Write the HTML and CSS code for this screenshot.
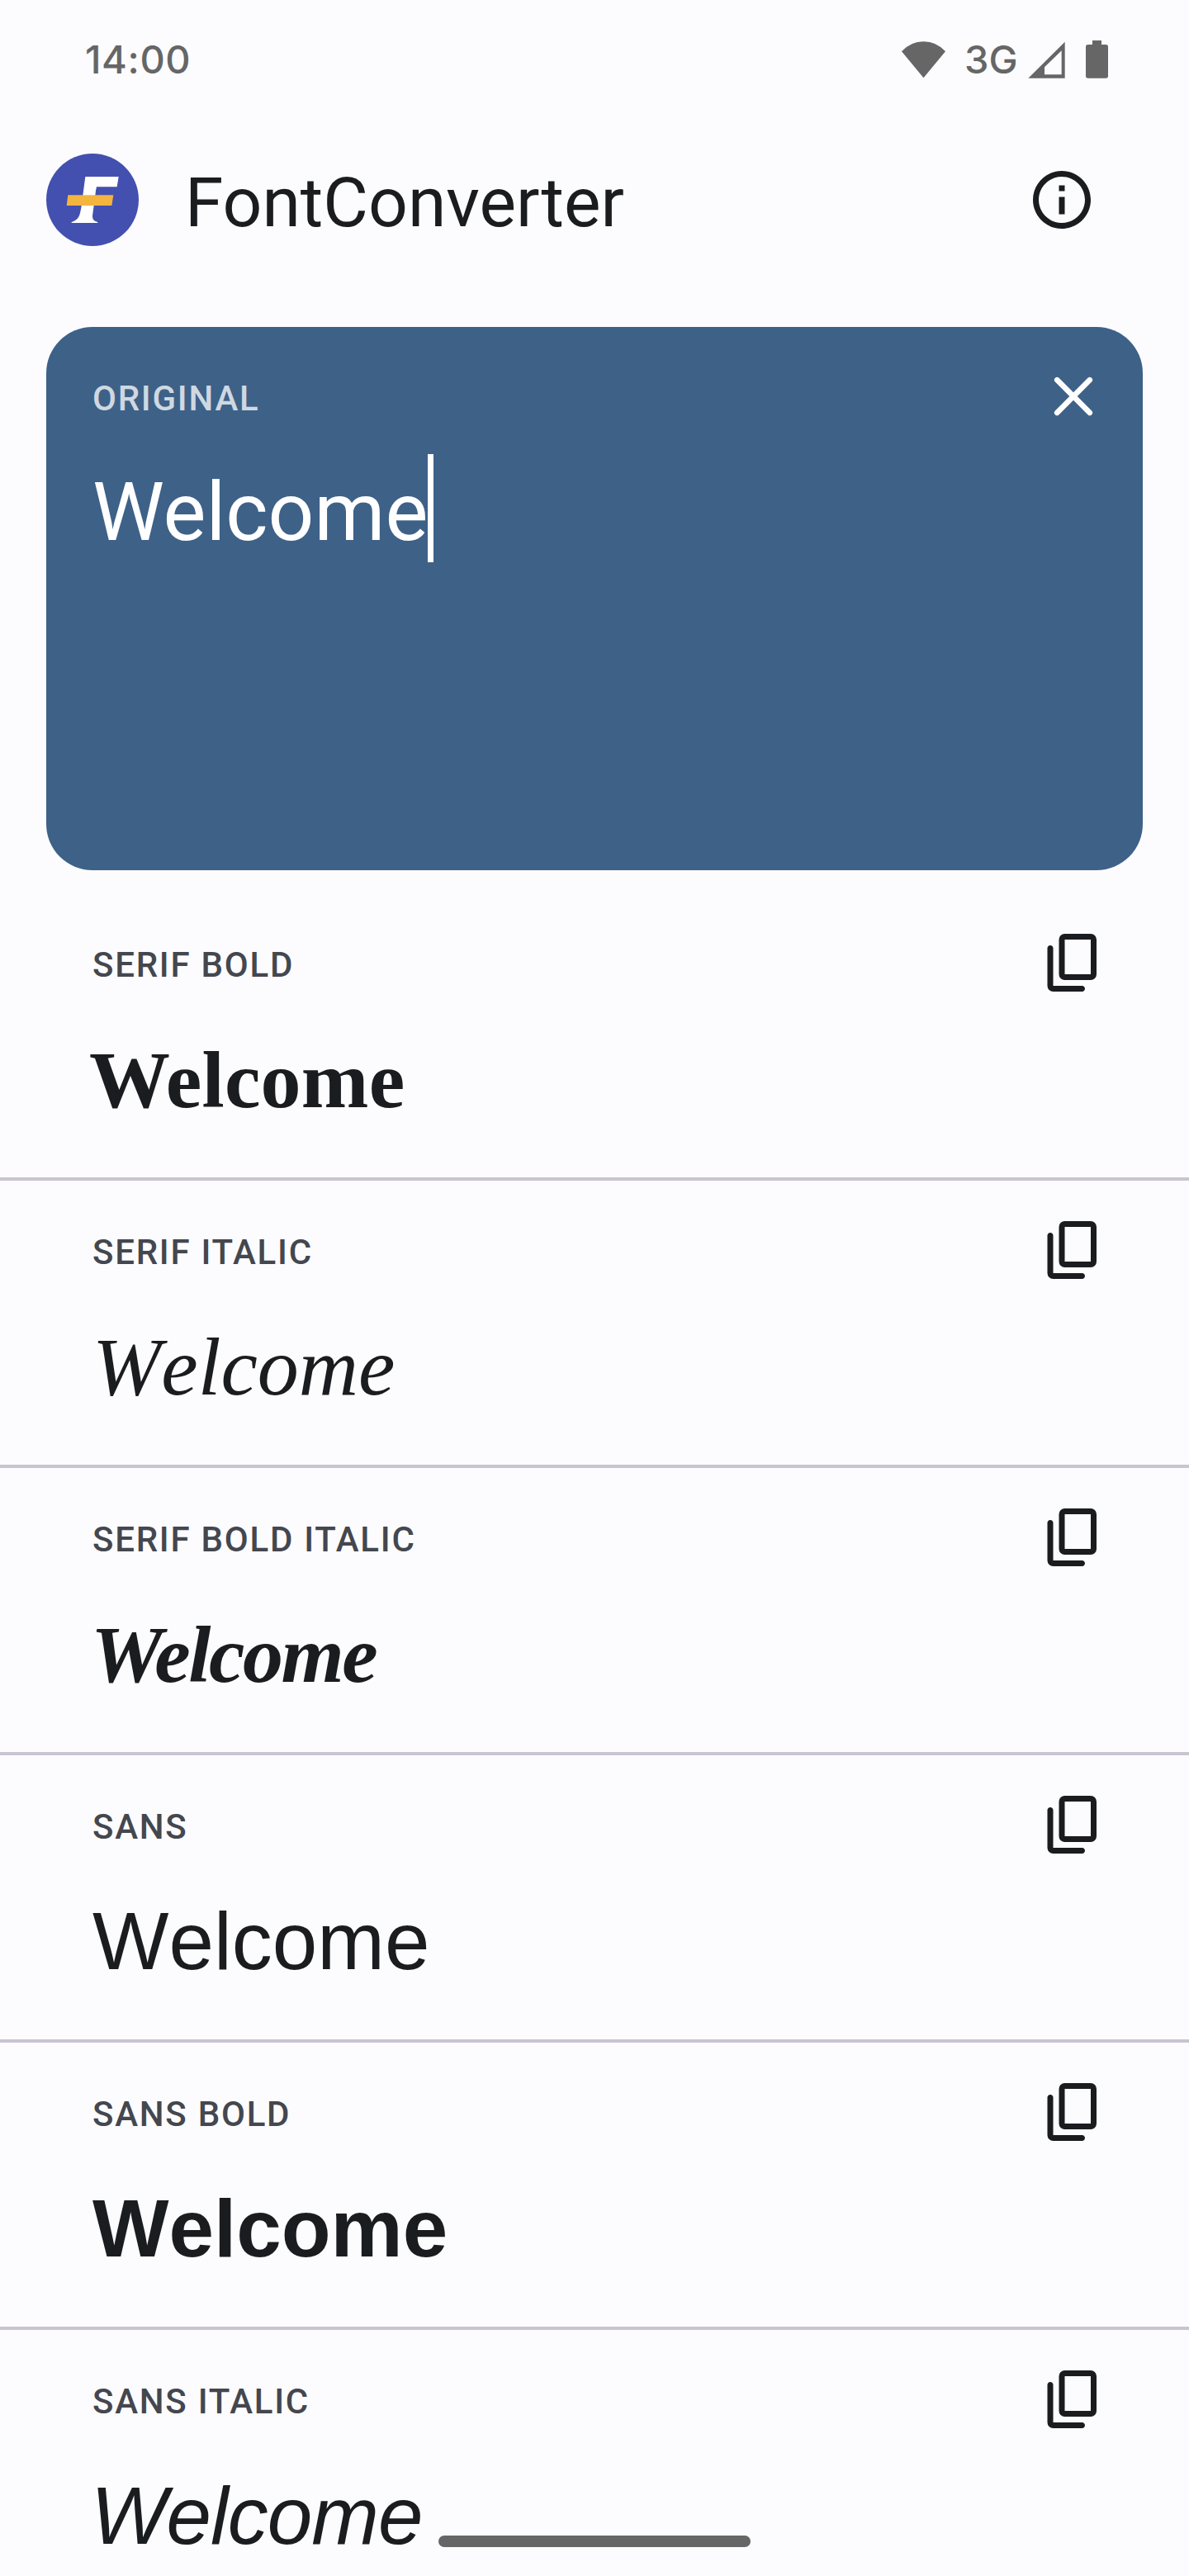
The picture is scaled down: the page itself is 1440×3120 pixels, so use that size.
FILE: index.html
```
<!DOCTYPE html>
<html lang="en">
<head>
<meta charset="utf-8">
<title>FontConverter</title>
<link rel="stylesheet" href="styles.css">
</head>
<body>
<svg class="defs" aria-hidden="true">
  <symbol id="copy" viewBox="0 -960 960 960"><path d="M360-240q-33 0-56.500-23.500T280-320v-480q0-33 23.500-56.500T360-880h360q33 0 56.500 23.500T800-800v480q0 33-23.500 56.500T720-240H360Zm0-80h360v-480H360v480ZM200-80q-33 0-56.500-23.500T120-160v-520q0-17 11.500-28.500T160-720q17 0 28.500 11.500T200-680v520h400q17 0 28.500 11.500T640-120q0 17-11.500 28.500T600-80H200Z"/></symbol>
</svg>
<main class="screen">
  <div class="status">
    <span class="clock">14:00</span>
    <svg class="wifi" viewBox="96 87 159 138"><path d="M96 127Q129 91 175.500 91T255 127L175.500 223Z"/></svg>
    <span class="network">3G</span>
    <svg class="signal" viewBox="555 87 135 138"><path fill-rule="evenodd" d="M556 224L689 92V224ZM615 211H677V124L615 184Z"/></svg>
    <svg class="battery" viewBox="765 87 81 138"><path d="M789 87H822V102H838Q846 102 846 110V216Q846 224 838 224H773Q765 224 765 216V110Q765 102 773 102H789Z"/></svg>
  </div>

  <header class="appbar">
    <svg class="logo" viewBox="48 498 336 336">
      <circle cx="216" cy="666" r="168" fill="#4450af"/>
      <path fill="#fff" d="M190 582H311L305 619H231Q227 634 226 650L216 724Q215 742 235 747V750H140V747Q160 742 168 724Q174 706 177 680Z"/>
      <path fill="#f4b53f" d="M127 649H292L286 687H122Z"/>
    </svg>
    <h1 class="title">FontConverter</h1>
    <svg class="icon" viewBox="0 0 24 24"><path d="M11 7h2v2h-2zm0 4h2v6h-2zm1-9C6.480 2 2 6.480 2 12s4.480 10 10 10 10-4.480 10-10S17.520 2 12 2zm0 18c-4.410 0-8-3.590-8-8s3.590-8 8-8 8 3.590 8 8-3.590 8-8 8z"/></svg>
  </header>

  <section class="card">
    <div class="head">
      <span class="label">ORIGINAL</span>
      <svg class="icon" viewBox="0 0 24 24"><path fill="none" stroke="currentColor" stroke-width="1.900" stroke-linecap="round" d="M6.350 6.350l11.300 11.300M17.650 6.350L6.350 17.650"/></svg>
    </div>
    <div class="input"><span>Welcome</span><i class="caret"></i></div>
  </section>

  <section class="list">
    <article class="row">
      <div class="head"><span class="label">SERIF BOLD</span><svg class="icon"><use href="#copy"/></svg></div>
      <p class="sample serif-bold">Welcome</p>
    </article>
    <article class="row">
      <div class="head"><span class="label">SERIF ITALIC</span><svg class="icon"><use href="#copy"/></svg></div>
      <p class="sample serif-italic">Welcome</p>
    </article>
    <article class="row">
      <div class="head"><span class="label">SERIF BOLD ITALIC</span><svg class="icon"><use href="#copy"/></svg></div>
      <p class="sample serif-bold-italic">Welcome</p>
    </article>
    <article class="row">
      <div class="head"><span class="label">SANS</span><svg class="icon"><use href="#copy"/></svg></div>
      <p class="sample sans">Welcome</p>
    </article>
    <article class="row">
      <div class="head"><span class="label">SANS BOLD</span><svg class="icon"><use href="#copy"/></svg></div>
      <p class="sample sans-bold">Welcome</p>
    </article>
    <article class="row">
      <div class="head"><span class="label">SANS ITALIC</span><svg class="icon"><use href="#copy"/></svg></div>
      <p class="sample sans-italic">Welcome</p>
    </article>
  </section>
  <div class="gesture"></div>
</main>
</body>
</html>
```
FILE: styles.css
```
* { box-sizing: border-box; }
body { margin: 0; background: #fcfcff; }
.defs { position: absolute; width: 0; height: 0; }
.screen {
  position: relative;
  width: 1440px;
  height: 3120px;
  overflow: hidden;
  color: #1a1c20;
  font-family: Roboto, sans-serif;
}
svg { display: block; flex: none; fill: currentColor; }
.icon { width: 84px; height: 84px; }

.status {
  display: flex;
  align-items: center;
  height: 144px;
  padding: 0 98px 0 103px;
  color: #666;
  font: 500 47px/144px Inter, sans-serif;
}
.clock { margin-right: auto; letter-spacing: 0.6px; }
.wifi { width: 53px; height: 46px; }
.network { width: 65px; margin: 0 12px 0 23px; }
.signal { width: 45px; height: 46px; margin-right: 25px; }
.battery { width: 27px; height: 46px; }

.appbar {
  display: flex;
  align-items: center;
  height: 196px;
  padding: 0 112px 0 56px;
}
.logo { width: 112px; height: 112px; }
.title {
  flex: 1;
  margin: 0 0 0 56px;
  padding-top: 8px;
  font-size: 84px;
  font-weight: 400;
  line-height: 100px;
}

.card {
  height: 658px;
  margin: 56px 56px 28px;
  padding: 42px 42px 0 56px;
  border-radius: 56px;
  background: #3e6188;
  color: #fff;
}
.head { display: flex; justify-content: space-between; height: 84px; }
.label {
  color: #44474e;
  font-size: 42px;
  font-weight: 500;
  line-height: 89px;
  letter-spacing: 1.75px;
}
.card .label { color: #cfd8e1; }
.input {
  display: flex;
  font-size: 98px;
  line-height: 197px;
}
.caret { width: 7px; height: 131px; margin-top: 28px; background: #fff; }

.row {
  height: 348px;
  padding: 42px 98px 0 112px;
  border-bottom: 4px solid #cac4d0;
}
.sample { margin: 0; font-size: 98px; line-height: 200px; white-space: nowrap; }
.serif-bold, .serif-italic, .serif-bold-italic { font-family: "Liberation Serif", serif; }
.serif-bold { margin-left: -4px; font-weight: 700; letter-spacing: 0.2px; }
.serif-italic { font-size: 100px; font-style: italic; line-height: 199px; font-kerning: none; }
.serif-bold-italic { margin-left: -2px; font-weight: 700; font-style: italic; letter-spacing: -2.5px; }
.sans, .sans-bold, .sans-italic { font-family: "Liberation Sans", sans-serif; line-height: 198px; font-kerning: none; }
.sans-bold { font-weight: 700; }
.sans-italic { margin-left: -2px; font-style: italic; letter-spacing: -1px; }

.gesture {
  position: absolute;
  left: 531px;
  bottom: 35px;
  width: 378px;
  height: 14px;
  border-radius: 7px;
  background: #666;
}
```
